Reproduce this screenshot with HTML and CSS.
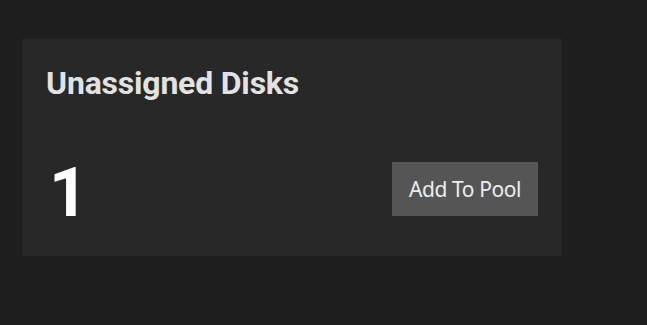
FILE: index.html
```html
<!DOCTYPE html>
<html>
<head>
<meta charset="utf-8">
<link rel="stylesheet" href="styles.css">
</head>
<body>
<div class="page">
  <section class="card">
    <h2 class="card-title">Unassigned Disks</h2>
    <div class="card-row">
      <span class="count">1</span>
      <button class="btn">Add To Pool</button>
    </div>
  </section>
</div>
</body>
</html>
```
FILE: styles.css
```css
html, body {
  margin: 0;
  padding: 0;
  background: #1e1e1e;
  height: 100%;
}
.page {
  padding: 39px 0 0 22px;
}
.card {
  box-sizing: border-box;
  width: 540px;
  height: 217px;
  background: #282828;
  padding: 24px 24px 40px 24px;
  display: flex;
  flex-direction: column;
  justify-content: space-between;
}
.card-title {
  margin: 0;
  font-family: Roboto, sans-serif;
  font-weight: 700;
  font-size: 32px;
  line-height: 40px;
  color: #e2e2e2;
  letter-spacing: -0.2px;
}
.card-row {
  display: flex;
  align-items: flex-end;
  justify-content: space-between;
}
.count {
  font-family: Roboto, sans-serif;
  font-weight: 700;
  font-size: 68px;
  line-height: 1;
  color: #ffffff;
  margin-bottom: -11px;
  padding-left: 3px;
}
.btn {
  border: none;
  background: #555555;
  color: #ececec;
  font-family: "Noto Sans", sans-serif;
  font-size: 21px;
  letter-spacing: -0.4px;
  width: 146px;
  height: 54px;
  padding: 0;
}
```
